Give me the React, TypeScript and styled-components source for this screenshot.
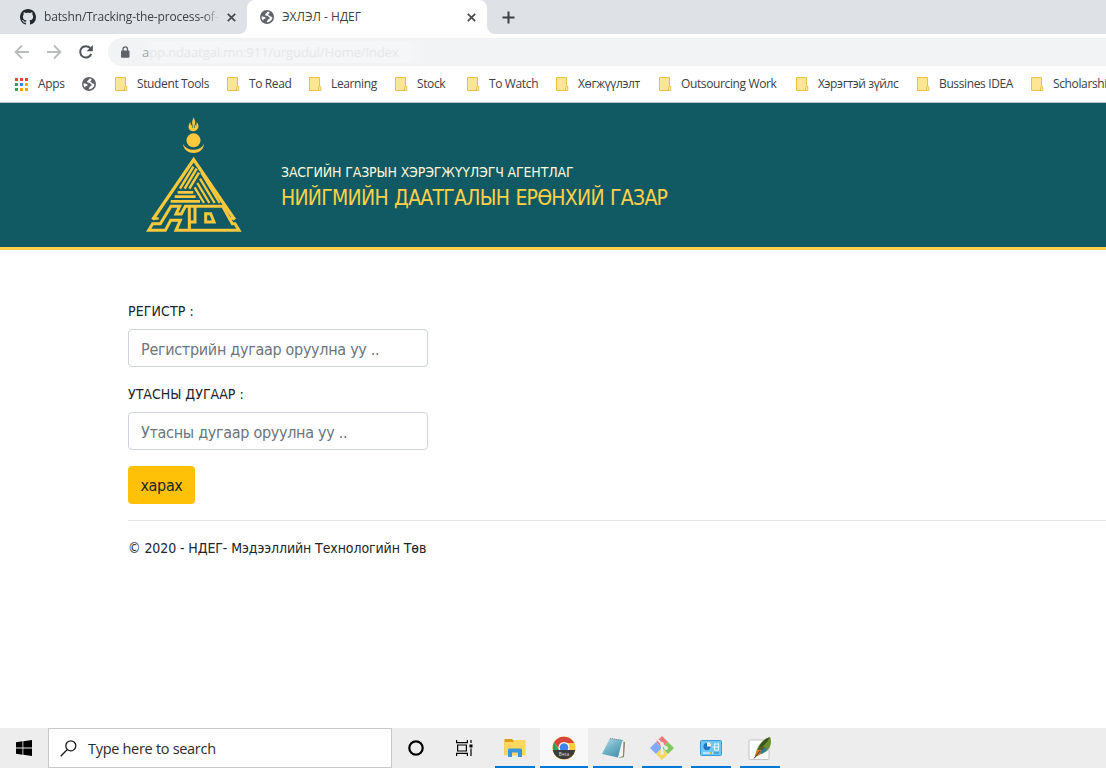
import React from 'react';
import styled, { createGlobalStyle } from 'styled-components';

const Global = createGlobalStyle`
  * { box-sizing: border-box; }
  body { margin: 0; background: #fff; overflow: hidden; }
  svg { display: block; flex: none; }
`;

const ui = `"Open Sans", "Noto Sans", sans-serif`;
const web = `"DejaVu Sans Condensed", "DejaVu Sans", sans-serif`;

const Screen = styled.div`
  width: 1106px;
  height: 768px;
  display: flex;
  flex-direction: column;
  overflow: hidden;
  font-family: ${ui};
`;

const Label = styled.span<{ $size?: number; $track?: number; $color?: string }>`
  font-size: ${p => p.$size ?? 12}px;
  letter-spacing: ${p => p.$track ?? 0}px;
  color: ${p => p.$color ?? '#3c4043'};
  white-space: nowrap;
`;

const TabStrip = styled.div`
  height: 34px;
  flex: none;
  display: flex;
  background: #fff;
`;

const Tab = styled.div<{ $active?: boolean; $width: number; $left: number }>`
  width: ${p => p.$width}px;
  height: 34px;
  flex: none;
  padding: 0 11px 0 ${p => p.$left}px;
  display: flex;
  align-items: center;
  gap: 8px;
  background: ${p => (p.$active ? '#fff' : '#dee1e6')};
  border-radius: ${p => (p.$active ? '8px 8px 0 0' : '0 0 8px 0')};
`;

const ActiveTabBack = styled.div`
  flex: none;
  background: linear-gradient(#dee1e6 50%, #fff 50%);
`;

const TabTitle = styled.div<{ $fade?: boolean }>`
  flex: 1;
  min-width: 0;
  overflow: hidden;
  display: flex;
  padding-bottom: 1px;
  ${p => p.$fade && 'mask-image: linear-gradient(90deg, #000 91%, transparent 100%);'}
`;

const StripRest = styled.div`
  flex: 1;
  display: flex;
  align-items: center;
  padding-left: 15px;
  background: #dee1e6;
  border-radius: 0 0 0 8px;
`;

const Toolbar = styled.div`
  height: 36px;
  flex: none;
  display: flex;
  align-items: center;
  padding-left: 14px;
  background: #fff;
`;

const NavButtons = styled.div`
  width: 94px;
  display: flex;
  gap: 16px;
`;

const Omnibox = styled.div`
  flex: 1;
  height: 28px;
  border-radius: 14px 0 0 14px;
  background: #f1f3f4;
  display: flex;
  align-items: center;
  gap: 12px;
  padding-left: 12px;
`;

const Address = styled.div`
  width: 284px;
  height: 22px;
  display: flex;
  align-items: center;
  background: linear-gradient(90deg, #f1f3f4, #f5f6f7 12px, #f5f6f7 93%, #f1f3f4);
  font-size: 13px;
  letter-spacing: -0.1px;
  color: #e6e8ea;
  white-space: nowrap;
  & b { font-weight: 400; color: #a4a7aa; }
`;

const Bookmarks = styled.div`
  height: 32px;
  flex: none;
  display: flex;
  align-items: center;
  padding: 0 0 4px 15px;
  background: #fff;
  overflow: hidden;
`;

const Bookmark = styled.div<{ $width: number; $gap?: number }>`
  width: ${p => p.$width}px;
  flex: none;
  display: flex;
  align-items: center;
  gap: ${p => p.$gap ?? 9}px;
  & > span { padding-bottom: 1px; }
`;

const Banner = styled.header`
  height: 148px;
  flex: none;
  padding: 13px 0 0 145px;
  display: flex;
  gap: 38px;
  background: #115a63;
  border-top: 1px solid #b9bfc4;
  border-bottom: 3px solid #ffd04a;
`;

const BannerText = styled.div`
  padding-top: 45px;
  font-family: ${web};
  display: flex;
  flex-direction: column;
`;

const Agency = styled.div`
  font-size: 14px;
  line-height: 23px;
  letter-spacing: -0.16px;
  color: #fdf8dc;
  white-space: nowrap;
`;

const Office = styled.h1`
  margin: 0;
  font-size: 21px;
  line-height: 28px;
  font-weight: 400;
  letter-spacing: -0.74px;
  word-spacing: 1px;
  color: #ffd04a;
  white-space: nowrap;
`;

const Page = styled.main`
  flex: 1;
  padding: 51px 0 0 128px;
  font-family: ${web};
  color: #212529;
  display: flex;
  flex-direction: column;
  align-items: flex-start;
`;

const FieldLabel = styled.label<{ $track?: number }>`
  font-size: 14px;
  line-height: 21px;
  letter-spacing: ${p => p.$track ?? 0}px;
  margin-bottom: 7px;
`;

const Field = styled.input<{ $last?: boolean }>`
  width: 300px;
  height: 38px;
  margin-bottom: ${p => (p.$last ? 16 : 17)}px;
  padding: 3px 12px 1px;
  border: 1px solid #ced4da;
  border-radius: 4px;
  font-family: ${web};
  font-size: 16px;
  letter-spacing: -0.3px;
  &::placeholder { color: #6c757d; opacity: 1; }
`;

const Submit = styled.button`
  width: 67px;
  height: 38px;
  padding: 1px 0 0;
  border: 0;
  border-radius: 4px;
  background: #ffc107;
  color: #212529;
  font-family: ${web};
  font-size: 16px;
  letter-spacing: -0.35px;
`;

const Footer = styled.footer`
  align-self: stretch;
  margin-top: 16px;
  padding-top: 17px;
  border-top: 1px solid #e5e5e5;
  font-size: 14px;
  line-height: 21px;
  letter-spacing: -0.1px;
`;

const Taskbar = styled.div`
  height: 40px;
  flex: none;
  display: flex;
  background: #ededed;
`;

const TaskCell = styled.div<{ $width: number; $gap?: number; $running?: boolean; $active?: boolean }>`
  width: ${p => p.$width}px;
  margin-right: ${p => p.$gap ?? 0}px;
  display: flex;
  align-items: center;
  justify-content: center;
  background: ${p => (p.$active ? '#f8f8f8' : 'transparent')};
  box-shadow: ${p => (p.$running ? 'inset 0 -2px #0078d7' : 'none')};
`;

const Search = styled.div`
  width: 344px;
  border: 1px solid #c8c8c8;
  background: #fff;
  display: flex;
  align-items: center;
  gap: 11px;
  padding-left: 11px;
`;

const Globe = () => (
  <svg width="14" height="14" viewBox="0 0 14 14">
    <circle cx="7" cy="7" r="7" fill="#5f6368" />
    <path d="M8.200 1.600C6.800 1.700 7.200 3.100 6 3.500C4.600 4.100 5 5.600 6.400 5.700C7.600 5.700 8.400 6.400 9.300 7.200C10 8 9.600 8.900 8.400 9.200C7.200 9.500 7.700 11 6.600 12.300C9.600 12.500 12.300 10.200 12.400 7.300C11.200 6.900 10.300 6.300 9.300 5.500C8.200 5.100 7.800 4.300 8.900 3.700C9.900 3.200 10 2.200 8.200 1.600Z" fill="#fff" />
    <path d="M1.500 6.600C2.600 6.500 4.200 6.600 5.400 7.500C6.100 8.200 5.200 9 4.200 8.900C3.200 8.900 3.300 10.200 3.100 10.800C2 9.800 1.400 8.300 1.500 6.600Z" fill="#fff" />
  </svg>
);

const Github = () => (
  <svg width="16" height="16" viewBox="0 0 16 16">
    <path fill="#24292e" d="M8 0C3.58 0 0 3.58 0 8c0 3.54 2.29 6.53 5.47 7.59.4.07.55-.17.55-.38 0-.19-.01-.82-.01-1.49-2.01.37-2.53-.49-2.69-.94-.09-.23-.48-.94-.82-1.13-.28-.15-.68-.52-.01-.53.63-.01 1.08.58 1.23.82.72 1.21 1.87.87 2.33.66.07-.52.28-.87.51-1.07-1.78-.2-3.64-.89-3.64-3.95 0-.87.31-1.59.82-2.15-.08-.2-.36-1.02.08-2.12 0 0 .67-.21 2.2.82.64-.18 1.32-.27 2-.27s1.36.09 2 .27c1.53-1.04 2.2-.82 2.2-.82.44 1.1.16 1.92.08 2.12.51.56.82 1.27.82 2.15 0 3.07-1.87 3.75-3.65 3.95.29.25.54.73.54 1.48 0 1.07-.01 1.93-.01 2.2 0 .21.15.46.55.38A8.01 8.01 0 0 0 16 8c0-4.42-3.58-8-8-8z" />
  </svg>
);

const Close = () => (
  <svg width="9" height="9" viewBox="0 0 9 9" stroke="#45494d" strokeWidth="1.7">
    <path d="M.8 .8L8.200 8.200M8.200 .8L.8 8.200" />
  </svg>
);

const Arrow = ({ flip }: { flip?: boolean }) => (
  <svg width="16" height="16" viewBox="0 0 16 16" fill="none" stroke="#babcbe" strokeWidth="1.8">
    <path d={flip ? 'M1 8H14M8 1.5L14.5 8L8 14.5' : 'M15 8H2M8 1.5L1.5 8L8 14.5'} />
  </svg>
);

const Reload = () => (
  <svg width="16" height="16" viewBox="0 0 16 16">
    <path d="M13.2 10A5.7 5.7 0 1 1 12.2 4.1" fill="none" stroke="#4f5357" strokeWidth="2" />
    <path d="M14.8 1V7.2H8.6Z" fill="#4f5357" />
  </svg>
);

const Lock = () => (
  <svg width="10" height="12" viewBox="0 0 10 12">
    <rect x="1" y="4.5" width="8.5" height="7.3" rx="1" fill="#5f6368" />
    <path d="M3 5V3.2a2.2 2.2 0 0 1 4.5 0V5" fill="none" stroke="#5f6368" strokeWidth="1.3" />
  </svg>
);

const Folder = () => (
  <svg width="13" height="14" viewBox="0 0 13 14">
    <path d="M.5.5H10.5V9.5H11.8V13.5H.5Z" fill="#ffe694" stroke="#e8c34a" />
    <path d="M9.5 13V10.5Q9.5 9.5 10.5 9.5" fill="none" stroke="#e8c34a" />
  </svg>
);

const appColors = ['#ea4335', '#ea4335', '#ea4335', '#34a060', '#2d8cf0', '#f5a800', '#34a060', '#f5a800', '#f5a800'];
const AppsGrid = () => (
  <svg width="13" height="13" viewBox="0 0 13 13">
    {appColors.map((c, i) => (
      <rect key={i} x={(i % 3) * 5} y={Math.floor(i / 3) * 5} width="3" height="3" fill={c} />
    ))}
  </svg>
);

const Emblem = () => (
  <svg width="98" height="117" viewBox="45 36 294 351" fill="none" stroke="#fac83c" strokeWidth="7">
    <g fill="#fac83c" stroke="none">
      <path d="M191 40C194 49 197 52 195 61L199 65L200 54C207 62 206 68 204 73C201 79 196 82 190 82C183 82 178 79 176 73C175 67 176 61 181 54L183 65L187 61C185 53 188 48 191 40Z" />
      <circle cx="190.500" cy="109" r="21" />
      <path d="M159 119C170 143 211 143 222 119C220 156 162 156 159 119Z" />
    </g>
    <path d="M188 72V62M194 72V62" stroke="#115a63" strokeWidth="2" />
    <path d="M68 347L191 167L314 347" strokeWidth="10" />
    <path d="M68 343.500H86M296 343.500H314" strokeWidth="7" />
    <path d="M190 188L150 254M200 194L164 254M207 206L178 254" strokeWidth="7.500" />
    <path d="M210 224L254 297M202 237L238 297M194 250L222 297M214 206L269 297" strokeWidth="7" />
    <path d="M143 265H190M134 278H197M122 292H210" strokeWidth="8" />
    <path d="M56 379L68 359H91L123 307H149L138 330H154L166 307H278L307 359H315L327 379H138L151 349H122L106 379Z" strokeWidth="9" />
    <path d="M178 307V380M195 307V354H178M227 329H242L252 354H227Z" strokeWidth="9" />
  </svg>
);

const Windows = () => (
  <svg width="16" height="16" viewBox="0 0 16 16">
    <path d="M0 2.2L6.500 1.300V7.500H0ZM7.300 1.200L16 0V7.500H7.300ZM0 8.400H6.500V14.700L0 13.800ZM7.300 8.400H16V16L7.300 14.800Z" />
  </svg>
);

const Magnifier = () => (
  <svg width="17" height="17" viewBox="0 0 17 17" fill="none" stroke="#1b1b1b" strokeWidth="1.300">
    <circle cx="10.800" cy="5.800" r="5" />
    <path d="M7.300 9.500L.7 16.200" />
  </svg>
);

const TaskView = () => (
  <svg width="17" height="16" viewBox="0 0 17 16" fill="none" stroke="#000" strokeWidth="1.200">
    <path d="M.6 0V2.600H11.400V0M.6 16V13.400H11.400V16M1.600 5H10.400V11H1.600ZM15 0V3M15 8.500V16" />
    <rect x="13.500" y="4.500" width="3" height="3" fill="#000" stroke="none" />
  </svg>
);

const Explorer = () => (
  <svg width="22" height="20" viewBox="0 0 22 20">
    <path d="M.5 1H8L10 3H21V17H.5Z" fill="#dd9e10" />
    <path d="M.5 4H9L11 2H21.500V17.500H.5Z" fill="#ffd65e" />
    <path d="M4 19V12Q4 10.500 5.500 10.500H16.500Q18 10.500 18 12V19H14V14.500H8V19Z" fill="#3a96dd" />
  </svg>
);

const Chrome = () => (
  <svg width="24" height="24" viewBox="0 0 24 24">
    <circle cx="12" cy="12" r="11.500" fill="#fdc93d" />
    <path d="M2 6.300A11.500 11.500 0 0 1 22.200 7H12L8 14Z" fill="#d8453a" />
    <path d="M2 6.300L8 15L6 21A11.500 11.500 0 0 1 2 6.300Z" fill="#2f9e5b" />
    <circle cx="12" cy="11.500" r="5.500" fill="#fff" />
    <circle cx="12" cy="11.500" r="4.300" fill="#3f82ee" />
    <path d="M.7 14H23.300A11.500 11.500 0 0 1 .7 14Z" fill="#3b3b3b" />
    <text x="12" y="19.500" fontSize="5" fill="#ddd" textAnchor="middle">Beta</text>
  </svg>
);

const Notepad = () => (
  <svg width="24" height="24" viewBox="0 0 24 24">
    <defs>
      <linearGradient id="sheet" x1="0" y1="0" x2="0.7" y2="1">
        <stop offset="0" stopColor="#c9e6ec" /><stop offset=".5" stopColor="#74b6ca" /><stop offset="1" stopColor="#4b93ad" />
      </linearGradient>
    </defs>
    <path d="M20 5L24 6L23 21L18 22Z" fill="#8a7a60" />
    <path d="M20 4L22.500 4.500L22 20L17 22Z" fill="#f1f4f2" />
    <path d="M9 2L21.500 4L17 21.500L1 18Z" fill="url(#sheet)" />
    <path d="M9 2.500L22 4.500" stroke="#7a898e" strokeDasharray="1 1" />
  </svg>
);

const Git = () => (
  <svg width="24" height="24" viewBox="0 0 24 24">
    <path d="M12 0L18 6L12 12L6 6Z" fill="#f07878" />
    <path d="M6 6L12 12L6 18L0 12Z" fill="#80aaf5" />
    <path d="M18 6L24 12L18 18L12 12Z" fill="#82c860" />
    <path d="M12 12L18 18L12 24L6 18Z" fill="#f6d75c" />
    <path d="M8 4L12 8V18M12 8L16 12" stroke="#e9e9e6" strokeWidth="2" fill="none" />
    <circle cx="12" cy="8" r="2" fill="#e9e9e6" /><circle cx="12" cy="17" r="2" fill="#e9e9e6" /><circle cx="16" cy="12" r="2" fill="#e9e9e6" />
  </svg>
);

const ControlPanel = () => (
  <svg width="22" height="16" viewBox="0 0 22 16">
    <rect x=".5" y=".5" width="21" height="15" rx="1" fill="#6cc8f5" stroke="#3a9ad5" />
    <circle cx="7" cy="6.500" r="3.800" fill="#fff" />
    <path d="M7 6.500V2.700A3.800 3.800 0 1 0 10.800 6.500Z" fill="#1d78c8" />
    <path d="M8 5.500V2A3.500 3.500 0 0 1 11 5.500Z" fill="#fff3d0" />
    <path d="M14.500 3.500V10.500M14.500 4H19M12.500 7H19M14.500 10H19M18.500 3.500V10.500" stroke="#e8f7fd" strokeWidth="1" />
    <path d="M3 13H10M11 13H13" stroke="#fff" strokeWidth="1.200" />
    <path d="M10 13H12" stroke="#f4a329" strokeWidth="2" />
    <path d="M14 13H19" stroke="#2b7fb8" strokeWidth="1" />
  </svg>
);

const Feather = () => (
  <svg width="24" height="24" viewBox="0 0 24 24">
    <rect x="1" y="4" width="20" height="19.500" rx="1" fill="#fff" stroke="#c4c4c4" />
    <path d="M22 1C24 5 23 11 19 15L13 18L7 21L8 16C10 9 15 3 22 1Z" fill="#6f8f2a" />
    <path d="M22 1C15 4 12 8 11 12L15 10L19 6Z" fill="#35551c" />
    <path d="M11 11L15 10L18 14L12 18L8 18Z" fill="#5a5a2a" />
    <path d="M9 14L14 14L12 19L7 20Z" fill="#e07a1c" />
    <path d="M12 16L17 11L19 14L14 18Z" fill="#2c7d9a" />
    <path d="M6 22.500L12 15" stroke="#283a3d" strokeWidth="1" />
  </svg>
);

const folders: { name: string; width: number }[] = [
  { name: 'Student Tools', width: 112 },
  { name: 'To Read', width: 82 },
  { name: 'Learning', width: 86 },
  { name: 'Stock', width: 72 },
  { name: 'To Watch', width: 89 },
  { name: 'Хөгжүүлэлт', width: 103 },
  { name: 'Outsourcing Work', width: 137 },
  { name: 'Хэрэгтэй зүйлс', width: 121 },
  { name: 'Bussines IDEA', width: 114 },
  { name: 'Scholarshi', width: 90 },
];

export default function App() {
  return (
    <Screen>
      <Global />
      <TabStrip>
        <Tab $width={247} $left={20}>
          <Github />
          <TabTitle $fade><Label $track={-0.14}>batshn/Tracking-the-process-of-p</Label></TabTitle>
          <Close />
        </Tab>
        <ActiveTabBack>
          <Tab $active $width={240} $left={13}>
            <Globe />
            <TabTitle><Label>ЭХЛЭЛ - НДЕГ</Label></TabTitle>
            <Close />
          </Tab>
        </ActiveTabBack>
        <StripRest>
          <svg width="13" height="13" viewBox="0 0 13 13" stroke="#3c4043" strokeWidth="2"><path d="M6.500 .5V12.500M.5 6.500H12.500" /></svg>
        </StripRest>
      </TabStrip>
      <Toolbar>
        <NavButtons><Arrow /><Arrow flip /><Reload /></NavButtons>
        <Omnibox>
          <Lock />
          <Address><b>a</b>pp.ndaatgal.mn:911/urgudul/Home/Index</Address>
        </Omnibox>
      </Toolbar>
      <Bookmarks>
        <Bookmark $width={67} $gap={10}><AppsGrid /><Label $track={-0.3}>Apps</Label></Bookmark>
        <Bookmark $width={33}><Globe /></Bookmark>
        {folders.map(f => (
          <Bookmark key={f.name} $width={f.width}>
            <Folder /><Label $track={-0.37}>{f.name}</Label>
          </Bookmark>
        ))}
      </Bookmarks>
      <Banner>
        <Emblem />
        <BannerText>
          <Agency>ЗАСГИЙН ГАЗРЫН ХЭРЭГЖҮҮЛЭГЧ АГЕНТЛАГ</Agency>
          <Office>НИЙГМИЙН ДААТГАЛЫН ЕРӨНХИЙ ГАЗАР</Office>
        </BannerText>
      </Banner>
      <Page>
        <FieldLabel $track={0.1}>РЕГИСТР :</FieldLabel>
        <Field placeholder="Регистрийн дугаар оруулна уу .." />
        <FieldLabel>УТАСНЫ ДУГААР :</FieldLabel>
        <Field $last placeholder="Утасны дугаар оруулна уу .." />
        <Submit>харах</Submit>
        <Footer>© 2020 - НДЕГ- Мэдээллийн Технологийн Төв</Footer>
      </Page>
      <Taskbar>
        <TaskCell $width={48}><Windows /></TaskCell>
        <Search><Magnifier /><Label $size={14.5} $track={-0.3} $color="#2b2b2b">Type here to search</Label></Search>
        <TaskCell $width={48}>
          <svg width="16" height="16" viewBox="0 0 16 16"><circle cx="8" cy="8" r="6.700" fill="none" stroke="#000" strokeWidth="2.200" /></svg>
        </TaskCell>
        <TaskCell $width={48} $gap={7}><TaskView /></TaskCell>
        <TaskCell $width={40} $gap={5} $running><Explorer /></TaskCell>
        <TaskCell $width={48} $gap={5} $running $active><Chrome /></TaskCell>
        <TaskCell $width={40} $gap={9} $running><Notepad /></TaskCell>
        <TaskCell $width={40} $gap={9} $running><Git /></TaskCell>
        <TaskCell $width={40} $gap={9} $running><ControlPanel /></TaskCell>
        <TaskCell $width={40} $running><Feather /></TaskCell>
      </Taskbar>
    </Screen>
  );
}
